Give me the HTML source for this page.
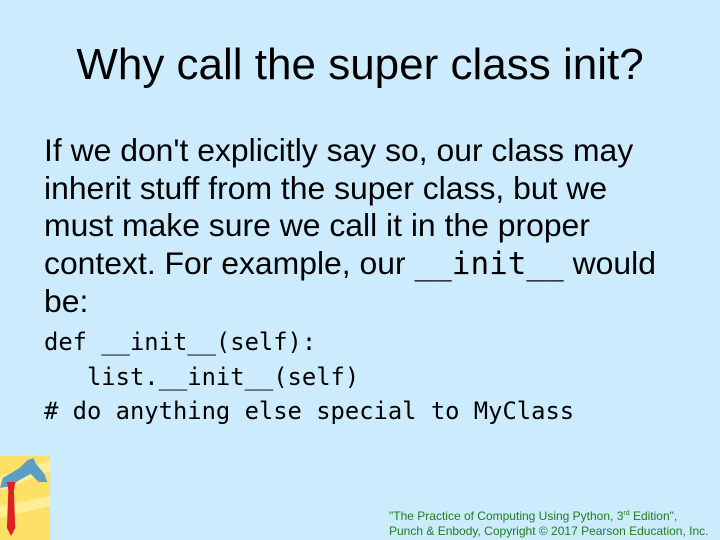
<!DOCTYPE html>
<html><head><style>
body{margin:0;width:720px;height:540px;background:#ccecfe;position:relative;overflow:hidden;font-family:"Liberation Sans",sans-serif;}
.t{position:absolute;left:0;width:720px;top:40px;text-align:center;font-size:44px;color:#000;}
.b{position:absolute;left:44px;top:132px;font-size:31.9px;line-height:37.5px;color:#000;width:620px;}
.m{font-family:"DejaVu Sans Mono",monospace;}
.c{position:absolute;left:44px;font-family:"DejaVu Sans Mono",monospace;font-size:23.8px;color:#000;white-space:pre;}
.f{position:absolute;left:389px;top:507px;font-size:12px;line-height:14.5px;color:#1c7e1c;white-space:nowrap;}
</style></head><body>
<div class="t">Why call the super class init?</div>
<div class="b">If we don't explicitly say so, our class may inherit stuff from the super class, but we must make sure we call it in the proper context. For example, our <span class="m" style="font-size:31px">__init__</span> would be:</div>
<div class="c" style="top:328px">def __init__(self):</div>
<div class="c" style="top:363px">   list.__init__(self)</div>
<div class="c" style="top:397px"># do anything else special to MyClass</div>
<svg style="position:absolute;left:0;top:456px" width="50" height="84" viewBox="0 0 36 84" preserveAspectRatio="none">
<rect width="36" height="84" fill="#fde066"/>
<path d="M0 20 L36 5 L36 15 L0 35Z M0 50 L36 40 L36 50 L0 62Z" fill="#fff3a8" opacity=".7"/>
<path d="M2 22 L14 12 L20 4 L24 2 L26 8 L32 18 L34 26 L28 26 L22 18 L14 24 L8 30 L0 32Z" fill="#5c9ec4"/>
<path d="M5 26 L11 26 L10 34 L11 72 L8 80 L5 72 L6 34Z" fill="#d22"/>
</svg>
<div class="f">"The Practice of Computing Using Python, 3<sup style="font-size:7px">rd</sup> Edition",<br>Punch &amp; Enbody, Copyright © 2017 Pearson Education, Inc.</div>
</body></html>
